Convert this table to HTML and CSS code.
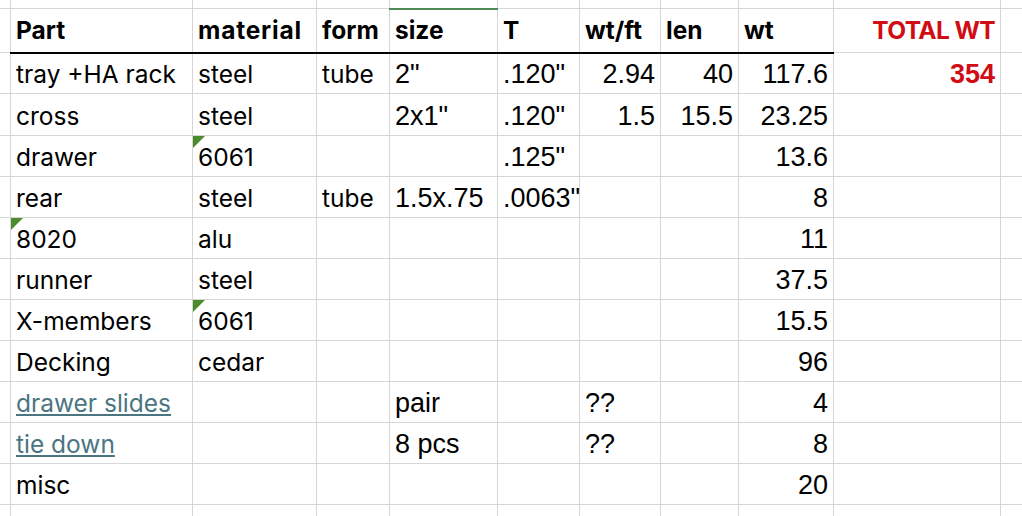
FILE: index.html
```html
<!DOCTYPE html>
<html>
<head>
<meta charset="utf-8">
<link rel="stylesheet" href="styles.css">
</head>
<body>
<table class="sheet">
  <colgroup>
    <col class="c-gut"><col class="c-a"><col class="c-b"><col class="c-c"><col class="c-d"><col class="c-e"><col class="c-f"><col class="c-g"><col class="c-h"><col class="c-i"><col class="c-j">
  </colgroup>
  <tr class="r-top"><td></td><td></td><td></td><td></td><td class="sel-top"></td><td></td><td></td><td></td><td></td><td></td><td></td></tr>
  <tr class="r-head">
    <td></td>
    <td class="hd">Part</td><td class="hd hd-wide">material</td><td class="hd">form</td><td class="hd">size</td><td class="hd">T</td><td class="hd">wt/ft</td><td class="hd">len</td><td class="hd">wt</td>
    <td class="total">TOTAL WT</td><td></td>
  </tr>
  <tr class="r">
    <td></td><td class="tx">tray +HA rack</td><td class="tx">steel</td><td class="tx">tube</td><td class="nt">2"</td><td class="nt">.120"</td><td class="num">2.94</td><td class="num">40</td><td class="num">117.6</td><td class="total-val">354</td><td></td>
  </tr>
  <tr class="r r-tall">
    <td></td><td class="tx">cross</td><td class="tx">steel</td><td></td><td class="nt">2x1"</td><td class="nt">.120"</td><td class="num">1.5</td><td class="num">15.5</td><td class="num">23.25</td><td></td><td></td>
  </tr>
  <tr class="r">
    <td></td><td class="tx">drawer</td><td class="tx flag"><span class="tri"></span>6061</td><td></td><td></td><td class="nt">.125"</td><td></td><td></td><td class="num">13.6</td><td></td><td></td>
  </tr>
  <tr class="r">
    <td></td><td class="tx">rear</td><td class="tx">steel</td><td class="tx">tube</td><td class="nt">1.5x.75</td><td class="nt">.0063"</td><td></td><td></td><td class="num">8</td><td></td><td></td>
  </tr>
  <tr class="r">
    <td></td><td class="tx flag"><span class="tri"></span>8020</td><td class="tx">alu</td><td></td><td></td><td></td><td></td><td></td><td class="num">11</td><td></td><td></td>
  </tr>
  <tr class="r">
    <td></td><td class="tx">runner</td><td class="tx">steel</td><td></td><td></td><td></td><td></td><td></td><td class="num">37.5</td><td></td><td></td>
  </tr>
  <tr class="r">
    <td></td><td class="tx">X-members</td><td class="tx flag"><span class="tri"></span>6061</td><td></td><td></td><td></td><td></td><td></td><td class="num">15.5</td><td></td><td></td>
  </tr>
  <tr class="r">
    <td></td><td class="tx">Decking</td><td class="tx">cedar</td><td></td><td></td><td></td><td></td><td></td><td class="num">96</td><td></td><td></td>
  </tr>
  <tr class="r">
    <td></td><td class="tx"><a class="link" href="#">drawer slides</a></td><td></td><td></td><td class="nt">pair</td><td></td><td class="nt">??</td><td></td><td class="num">4</td><td></td><td></td>
  </tr>
  <tr class="r">
    <td></td><td class="tx"><a class="link" href="#">tie down</a></td><td></td><td></td><td class="nt">8 pcs</td><td></td><td class="nt">??</td><td></td><td class="num">8</td><td></td><td></td>
  </tr>
  <tr class="r">
    <td></td><td class="tx">misc</td><td></td><td></td><td></td><td></td><td></td><td></td><td class="num">20</td><td></td><td></td>
  </tr>
  <tr class="r-bot"><td></td><td></td><td></td><td></td><td></td><td></td><td></td><td></td><td></td><td></td><td></td></tr>
</table>
</body>
</html>
```
FILE: styles.css
```css
html, body {
  margin: 0;
  padding: 0;
  background: #ffffff;
  overflow: hidden;
}

.sheet {
  border-collapse: collapse;
  table-layout: fixed;
  width: 1052px;
  margin-top: -1px;
  margin-left: -1px;
  color: #000;
  font-family: Inter, "Liberation Sans", sans-serif;
  font-size: 24.5px;
}

.c-gut { width: 11px; }
.c-a { width: 182px; }
.c-b { width: 124px; }
.c-c { width: 73px; }
.c-d { width: 108px; }
.c-e { width: 82px; }
.c-f { width: 81px; }
.c-g { width: 78px; }
.c-h { width: 95px; }
.c-i { width: 167px; }
.c-j { width: 51px; }

.sheet td {
  border: 1px solid #d6d6d6;
  padding: 0 5px 4px 5px;
  vertical-align: bottom;
  white-space: nowrap;
  overflow: visible;
  line-height: 30px;
}

.r-top { height: 9px; }
.r-head { height: 44px; }
.r { height: 41px; }
.r-tall { height: 42px; }
.r-bot { height: 20px; }

.r-top td, .r-bot td { padding: 0; line-height: 0; }
.sheet .r-head td { padding-bottom: 7px; }

.sheet .sel-top { border-bottom: 2px solid #4f8a57; }

.sheet .hd {
  font-weight: 700;
  border-bottom: 2px solid #000;
}

.sheet .hd-wide { letter-spacing: 0.8px; }

.tx { text-align: left; }

.sheet .nt {
  font-family: "Liberation Sans", Arial, sans-serif;
  font-size: 27px;
  text-align: left;
}

.sheet .num {
  font-family: "Liberation Sans", Arial, sans-serif;
  font-size: 27px;
  text-align: right;
}

.sheet .total {
  font-weight: 700;
  color: #d00c14;
  text-align: right;
  letter-spacing: -0.6px;
}

.sheet .total-val {
  font-family: "Liberation Sans", Arial, sans-serif;
  font-size: 27px;
  font-weight: 700;
  color: #d00c14;
  text-align: right;
}

.flag { position: relative; }

.tri {
  position: absolute;
  left: 0;
  top: 0;
  width: 0;
  height: 0;
  border-top: 12px solid #4b8b2b;
  border-right: 12px solid transparent;
}

.link {
  color: #4a7682;
  text-decoration: underline;
  text-decoration-thickness: 1.5px;
  text-underline-offset: 2px;
}
```
